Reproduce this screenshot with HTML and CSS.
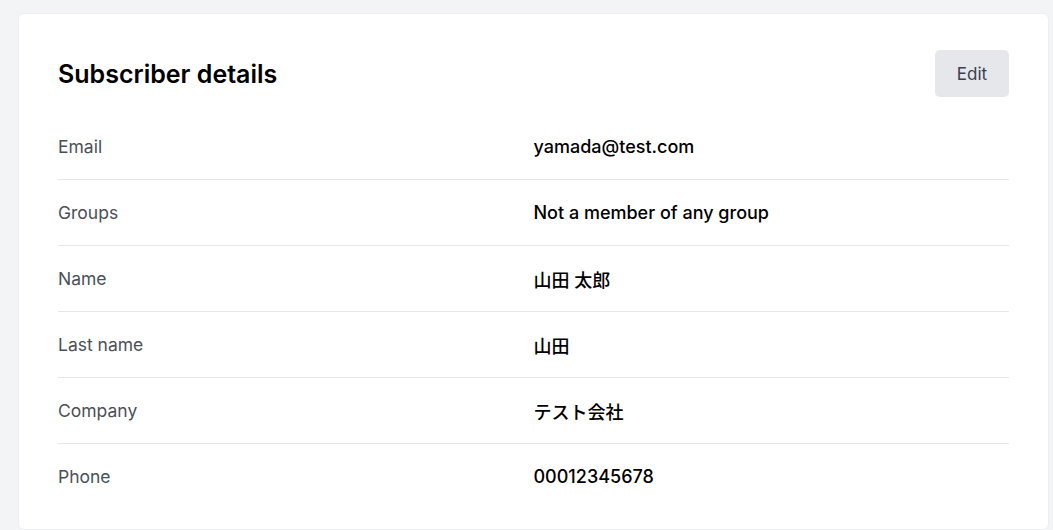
FILE: index.html
```html
<!DOCTYPE html>
<html lang="en">
<head>
<meta charset="utf-8">
<title>Subscriber details</title>
<link rel="stylesheet" href="styles.css">
</head>
<body>
<div class="page">
  <section class="card">
    <header class="card-header">
      <h2 class="title">Subscriber details</h2>
      <button class="btn-edit" type="button">Edit</button>
    </header>
    <dl class="details">
      <div class="row"><dt class="label">Email</dt><dd class="value">yamada@test.com</dd></div>
      <div class="row"><dt class="label">Groups</dt><dd class="value">Not a member of any group</dd></div>
      <div class="row"><dt class="label">Name</dt><dd class="value">山田 太郎</dd></div>
      <div class="row"><dt class="label">Last name</dt><dd class="value">山田</dd></div>
      <div class="row"><dt class="label">Company</dt><dd class="value">テスト会社</dd></div>
      <div class="row"><dt class="label">Phone</dt><dd class="value">00012345678</dd></div>
    </dl>
  </section>
</div>
</body>
</html>
```

FILE: styles.css
```css
* { box-sizing: border-box; }
html, body { margin: 0; padding: 0; }
body {
  background: #f3f4f6;
  font-family: Inter, "Noto Sans CJK JP", sans-serif;
  color: #111827;
}
.page {
  padding: 13px 4px 0 18px;
}
.card {
  background: #ffffff;
  border: 1px solid #eceef1;
  border-radius: 6px;
  padding: 36px 39px 19px 39px;
}
.card-header {
  display: flex;
  align-items: center;
  justify-content: space-between;
  height: 47px;
  margin-bottom: 17px;
}
.title {
  margin: 0;
  font-size: 25px;
  font-weight: 600;
  color: #000000;
}
.btn-edit {
  width: 74px;
  height: 47px;
  border: none;
  border-radius: 5px;
  background: #e5e7eb;
  color: #374151;
  font-family: Inter, sans-serif;
  font-size: 17px;
  font-weight: 400;
  padding: 0;
}
.details {
  margin: 0;
}
.row {
  display: grid;
  grid-template-columns: 1fr 1fr;
  align-items: center;
  height: 66px;
  border-bottom: 1px solid #e5e7eb;
}
.row:last-child {
  border-bottom-color: transparent;
}
.label {
  margin: 0;
  font-size: 17.5px;
  color: #4b4f58;
}
.value {
  margin: 0;
  font-size: 18px;
  font-weight: 500;
  color: #000000;
}
```
